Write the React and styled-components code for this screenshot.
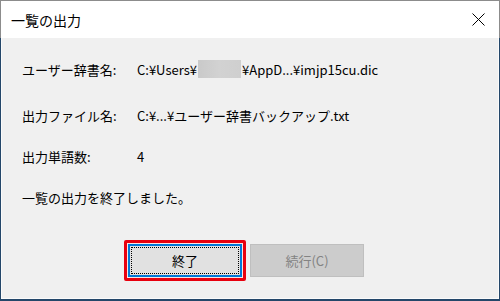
import React from "react";
import styled, { createGlobalStyle } from "styled-components";

const GlobalStyle = createGlobalStyle`
  html, body {
    margin: 0;
    padding: 0;
    background: #ffffff;
  }
  body {
    font-family: "Noto Sans CJK JP", "Noto Sans", sans-serif;
    color: #000;
  }
`;

const Frame = styled.div`
  width: 500px;
  height: 301px;
  box-sizing: border-box;
  padding: 1px 1px 2px 1px;
  background: linear-gradient(#8c8c8c 0 38px, #24476a 38px);
  display: flex;
  flex-direction: column;
`;

const TitleBar = styled.div`
  height: 37px;
  flex: none;
  background: #ffffff;
  display: flex;
  align-items: center;
  justify-content: space-between;
  padding: 0 14px 0 10px;
`;

const Title = styled.span`
  font-size: 14px;
  line-height: 20px;
  letter-spacing: 0;
`;

const CloseButton = styled.div`
  width: 14px;
  height: 14px;
  display: flex;
  align-items: center;
  justify-content: center;
  margin-top: -1px;
`;

const Body = styled.div`
  flex: 1;
  background: #f0f0f0;
  border: 1px solid #fbfbfb;
  border-top: none;
  padding: 21px 0 0 20px;
  display: flex;
  flex-direction: column;
`;

const Row = styled.div`
  display: flex;
  align-items: center;
  height: 20px;
  margin-top: ${(p) => p.$mt || 0}px;
  font-size: 13px;
  white-space: nowrap;
`;

const Label = styled.span`
  width: 115px;
  flex: none;
`;

const Value = styled.span`
  display: inline-flex;
  align-items: center;
`;

const Blur = styled.span`
  display: inline-block;
  width: 43px;
  height: 18px;
  margin: 0 1px;
  background: linear-gradient(90deg, #c9c9c9, #d2d2d2 50%, #cfcfcf);
  filter: blur(0.6px);
`;

const ButtonRow = styled.div`
  display: flex;
  align-items: center;
  gap: 4px;
  margin-top: 33px;
  padding-left: 102px;
`;

const Highlight = styled.div`
  border: 3px solid #e8000e;
  border-radius: 2px;
  padding: 1px;
  background: #f6e6e6;
`;

const Button = styled.div`
  width: 114px;
  height: 33px;
  box-sizing: border-box;
  display: flex;
  align-items: center;
  justify-content: center;
  position: relative;
  font-size: 13px;
  background: ${(p) => (p.$disabled ? "#cccccc" : "#e1e1e1")};
  color: ${(p) => (p.$disabled ? "#838383" : "#000")};
  border: ${(p) =>
    p.$focused ? "2px solid #0078d7" : p.$disabled ? "1px solid #bfbfbf" : "1px solid #adadad"};
`;

const FocusRing = styled.div`
  position: absolute;
  inset: 1px;
  border: 1px dotted #000;
  pointer-events: none;
`;

export default function App() {
  return (
    <>
      <GlobalStyle />
      <Frame>
        <TitleBar>
          <Title>一覧の出力</Title>
          <CloseButton>
            <svg width="13" height="13" viewBox="0 0 13 13">
              <path d="M0.5 0.5 L12.5 12.5 M12.5 0.5 L0.5 12.5" stroke="#000" strokeWidth="1" fill="none" />
            </svg>
          </CloseButton>
        </TitleBar>
        <Body>
          <Row>
            <Label>ユーザー辞書名:</Label>
            <Value>
              C:¥Users¥<Blur />¥AppD...¥imjp15cu.dic
            </Value>
          </Row>
          <Row $mt={26}>
            <Label>出力ファイル名:</Label>
            <Value>C:¥...¥ユーザー辞書バックアップ.txt</Value>
          </Row>
          <Row $mt={21}>
            <Label>出力単語数:</Label>
            <Value>4</Value>
          </Row>
          <Row $mt={21}>
            <span>一覧の出力を終了しました。</span>
          </Row>
          <ButtonRow>
            <Highlight>
              <Button $focused>
                <FocusRing />
                終了
              </Button>
            </Highlight>
            <Button $disabled>続行(C)</Button>
          </ButtonRow>
        </Body>
      </Frame>
    </>
  );
}
